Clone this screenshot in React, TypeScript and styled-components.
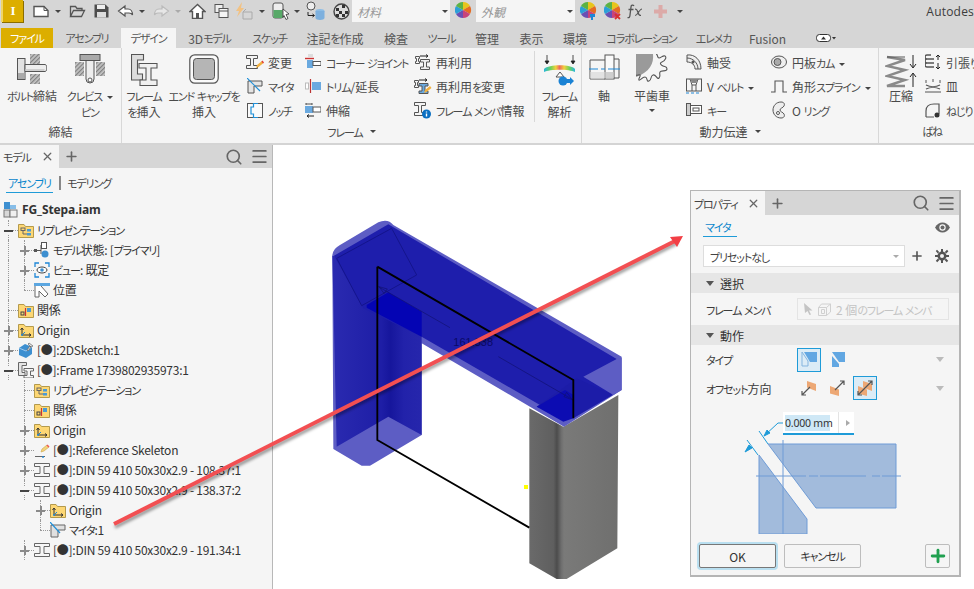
import React from 'react';
import styled, { createGlobalStyle } from 'styled-components';
import { Search, X, Plus, Menu } from 'lucide-react';

const GlobalStyle = createGlobalStyle`
  html, body {
    margin: 0;
    padding: 0;
    background: #fff;
  }
  body {
    font-family: "Noto Sans CJK JP", "Noto Sans", sans-serif;
    font-size: 12px;
    font-weight: 400;
    color: #3c3c3c;
    font-feature-settings: "palt" 1;
    -webkit-font-smoothing: antialiased;
  }
`;

/* the kana of the original UI font are much narrower than its kanji */
const Kana = styled.span`
  font-size: 11px;
  letter-spacing: -1.1px;
`;

const J = ({ t }: { t: string }) => (
  <>
    {t.split(/([\u3040-\u30FF]+)/).map((part, i) =>
      i % 2 ? <Kana key={i}>{part}</Kana> : part
    )}
  </>
);

/* ---------- icons ---------- */

const S = '#555';

const Glyph = ({ w = 16, h = 16, children }: { w?: number; h?: number; children: React.ReactNode }) => (
  <svg width={w} height={h} viewBox={`0 0 ${w} ${h}`} style={{ display: 'block', flex: 'none' }}>
    {children}
  </svg>
);

const Caret = styled.span<{ $c?: string }>`
  display: inline-block;
  width: 0;
  height: 0;
  border-left: 3px solid transparent;
  border-right: 3px solid transparent;
  border-top: 3px solid ${p => p.$c || '#444'};
  flex: none;
`;

const Hatch = ({ id }: { id: string }) => (
  <pattern id={id} width="3" height="3" patternUnits="userSpaceOnUse" patternTransform="rotate(45)">
    <rect width="3" height="3" fill="#c4c4c4" />
    <rect width="1.2" height="3" fill="#808080" />
  </pattern>
);

const NewIcon = () => (
  <Glyph w={17}>
    <path d="M1 3.500h10l4 4v6H1z" fill="#fff" stroke={S} strokeWidth="1.400" />
    <path d="M11 3.500v4h4" fill="none" stroke={S} />
  </Glyph>
);
const OpenIcon = () => (
  <Glyph w={17}>
    <path d="M1.500 13.500v-10h5l1.500 2h5v2M1.500 13.500l3-6h11l-3 6z" fill="none" stroke={S} strokeWidth="1.300" />
  </Glyph>
);
const SaveIcon = () => (
  <Glyph w={15}>
    <path d="M.5 1.500h11l3 3v10H.5z" fill="#4d4d4d" />
    <rect x="3" y="2" width="8" height="4" fill="#eee" />
    <rect x="3" y="9" width="9" height="5.500" fill="#ddd" />
  </Glyph>
);
const UndoIcon = () => (
  <Glyph w={17}>
    <path d="M8 3 1.500 8 8 13v-3h4c2 0 3 1 3.500 2 0-3-1.500-6-4.500-6H8z" fill="#fff" stroke={S} strokeWidth="1.200" />
  </Glyph>
);
const RedoIcon = () => (
  <Glyph w={17}>
    <path d="M9 3l6.500 5L9 13v-3H5c-2 0-3 1-3.500 2 0-3 1.500-6 4.500-6h3z" fill="#e6e6e6" stroke="#bbb" strokeWidth="1.200" />
  </Glyph>
);
const HomeIcon = () => (
  <Glyph w={17}>
    <path d="M8.500 1.500 1 8.500h2.500v7h10v-7H16z" fill="#fff" stroke={S} strokeWidth="1.400" />
    <rect x="7" y="10" width="3" height="5.500" fill={S} />
  </Glyph>
);
const WindowsIcon = () => (
  <Glyph w={15}>
    <rect x="1" y="1.500" width="8" height="8" fill="#eee" stroke={S} />
    <rect x="5" y="5.500" width="9" height="9" fill="#f5f5f5" stroke={S} />
    <path d="M5 8h9" stroke={S} />
  </Glyph>
);
const UpdateIcon = () => (
  <Glyph w={18} h={18}>
    <path d="M7 0 1 9h3l-2 6 7-9H6z" fill="#f2c283" />
    <path d="M8 10h9v7H8z" fill="none" stroke="#aaa" />
    <path d="M8 10l3-3" stroke="#aaa" />
  </Glyph>
);
const SelectIcon = () => (
  <Glyph w={18} h={18}>
    <rect x="1" y="1" width="10" height="15" rx="2" fill="#eee" stroke={S} />
    <rect x="1.500" y="8" width="9" height="8" fill="#58a968" />
    <path d="M11 7l6 5-3 .5 2 4-2 1-2-4-1 2z" fill="#fff" stroke="#333" strokeWidth=".8" />
  </Glyph>
);
const DbIcon = () => (
  <Glyph w={19} h={20}>
    <circle cx="5" cy="5" r="4" fill="#eee" stroke={S} />
    <path d="M2 11v3.500h6M6.500 13l2 1.500-2 1.500" fill="none" stroke="#222" />
    <ellipse cx="14" cy="10" rx="4.500" ry="2" fill="#8cbde6" />
    <path d="M9.500 10v7c0 2.500 9 2.500 9 0v-7" fill="#7db0de" />
  </Glyph>
);
const CheckerIcon = () => (
  <Glyph w={17} h={17}>
    <circle cx="8.500" cy="8.500" r="7.500" fill="#ddd" stroke="#444" strokeWidth="1.400" />
    <path d="M3 5h3v3H3zM9 2h3v3H9zM6 8h3v3H6zM12 8h3v3h-3zM9 11h3v3H9zM3 11h3v3H3z" fill="#333" />
  </Glyph>
);
const Wheel = ({ badge }: { badge?: 'paint' | 'x' }) => (
  <Glyph w={17} h={18}>
    <path d="M8 8V0a8 8 0 0 1 7 4z" fill="#e8c51c" />
    <path d="M8 8l7-4a8 8 0 0 1 0 8z" fill="#e56b22" />
    <path d="M8 8l7 4a8 8 0 0 1-7 4z" fill="#c8437a" />
    <path d="M8 8v8a8 8 0 0 1-7-4z" fill="#6a4fb3" />
    <path d="M8 8l-7 4a8 8 0 0 1 0-8z" fill="#2c9fd8" />
    <path d="M8 8 1 4a8 8 0 0 1 7-4z" fill="#5cb244" />
    {badge === 'paint' && <path d="M10 12h5v3h-2v3h-2v-3h-1z" fill="#1f87d6" />}
    {badge === 'x' && <path d="M11 12l5 5M16 12l-5 5" stroke="#d83030" strokeWidth="1.800" />}
  </Glyph>
);
const FxIcon = () => (
  <Glyph w={18}>
    <path d="M7 3c-1-1.500-3-1-3 1l-1 8c0 2-1 3-2.500 2.500M1.500 6.500h5" fill="none" stroke={S} strokeWidth="1.300" />
    <path d="M8 6c2 0 2.500 1.500 3 3.500s1.500 3 3 3M15 6c-1.500 0-3 2.500-4 4s-2 2.500-3 2.500" fill="none" stroke={S} strokeWidth="1.200" />
  </Glyph>
);
const PinkPlus = () => (
  <Glyph w={13} h={13}>
    <path d="M4.500 0h4v4.500H13v4H8.500V13h-4V8.500H0v-4h4.500z" fill="#dcaaa8" />
  </Glyph>
);
const BoltIcon = () => (
  <Glyph w={30} h={30}>
    <defs><Hatch id="hb" /></defs>
    <rect x="13" y="0" width="10" height="10" fill="url(#hb)" />
    <rect x="13" y="20" width="10" height="10" fill="url(#hb)" />
    <rect x=".5" y="4.500" width="7.500" height="21" fill="#e2e2e2" stroke={S} />
    <rect x="1" y="19" width="6.500" height="6" fill="#aaa" />
    <path d="M8 10.500h20c2.500 0 2.500 7 0 7H8z" fill="#eee" stroke={S} />
    <rect x="8.500" y="15" width="19" height="2" fill="#cfcfcf" />
  </Glyph>
);
const ClevisIcon = () => (
  <Glyph w={30} h={30}>
    <defs><Hatch id="hc" /></defs>
    <rect x="0" y="8" width="9" height="14" fill="url(#hc)" />
    <rect x="21" y="8" width="9" height="14" fill="url(#hc)" />
    <rect x="5" y=".5" width="20" height="6" fill="#aaa" stroke={S} />
    <path d="M11 6.500h8V25a4 4 0 0 1-8 0z" fill="#eee" stroke={S} />
    <circle cx="15" cy="26" r="2" fill="#fff" stroke={S} />
  </Glyph>
);
const FrameInsertIcon = () => (
  <Glyph w={27} h={32}>
    <path d="M.5.500h12V6h-6v14h5v6H.5z" fill="#ddd" stroke={S} strokeWidth="1.100" />
    <path d="M8 9.500h18V14h-6v12h6v5.500H9V26h6V14H8z" fill="#f0f0f0" stroke={S} strokeWidth="1.100" />
  </Glyph>
);
const EndCapIcon = () => (
  <Glyph w={30} h={30}>
    <rect x=".8" y=".8" width="28.400" height="28.400" rx="5" fill="#fafafa" stroke={S} strokeWidth="1.200" />
    <rect x="4.500" y="4.500" width="21" height="21" rx="3" fill="#b5b5b5" stroke={S} />
  </Glyph>
);
const ChangeIcon = () => (
  <Glyph w={18}>
    <path d="M.5 1.500h11v3h-4v7h4v3H.5v-3h4v-7h-4z" fill="#f4f4f4" stroke={S} />
    <path d="M10 14l1-3 5-4 1.500 2-5 4z" fill="#f0b040" />
    <path d="M15.500 7.500l1-1 1.500 2-1 1z" fill="#e23a3a" />
  </Glyph>
);
const MiterIcon = () => (
  <Glyph w={16}>
    <path d="M1 3h14v5H7v7H1z" fill="#e4e4e4" stroke={S} />
    <path d="M0 0l13 13" stroke="#1f8fd8" strokeWidth="1.200" />
  </Glyph>
);
const NotchIcon = () => (
  <Glyph w={16}>
    <rect x=".5" y="1.500" width="15" height="14" fill="#fafafa" stroke={S} />
    <path d="M11 1.500H6.500V5H4v7h2.500v3.500H11" fill="none" stroke="#1f8fd8" strokeWidth="1.200" />
  </Glyph>
);
const CornerIcon = () => (
  <Glyph w={16}>
    <rect x="3" y="0" width="5" height="3" fill="#ddd" />
    <path d="M0 4.500h9" stroke="#c33" strokeWidth="1.400" />
    <rect x="2" y="6" width="6" height="8" fill="#6aa9df" />
    <rect x="8" y="7.500" width="8" height="4" fill="#fff" stroke={S} />
  </Glyph>
);
const TrimIcon = () => (
  <Glyph w={16}>
    <rect x=".5" y="5" width="3" height="6" fill="#fff" stroke="#bbb" />
    <path d="M5.500 1v14" stroke="#b33" strokeWidth="1.200" />
    <rect x="7" y="4" width="9" height="8" fill="#6aa9df" />
  </Glyph>
);
const LengthenIcon = () => (
  <Glyph w={16}>
    <path d="M1 1v2M1 2h6M7 1v2" stroke={S} />
    <rect x="0" y="4" width="8" height="7" fill="#6aa9df" />
    <rect x="8" y="5" width="8" height="5" fill="#fff" stroke={S} />
    <path d="M2 14h7M2 14l2-1.500M2 14l2 1.500" stroke="#222" fill="none" />
  </Glyph>
);
const ReuseIcon = () => (
  <Glyph w={16} h={17}>
    <path d="M.5 2.500h4v2h-1v3h1v2h-4v-2h1v-3h-1z" fill="#f5f5f5" stroke={S} />
    <path d="M5.500 5.500h9V8h-3v5h3v2.500h-9V13h3V8h-3z" fill="#eee" stroke={S} />
    <path d="M5 2h8l-2-1.500M13 2l-2 1.500" stroke="#222" fill="none" />
  </Glyph>
);
const ReuseChangeIcon = () => (
  <Glyph w={18} h={17}>
    <path d="M.5 2.500h4v2h-1v3h1v2h-4v-2h1v-3h-1z" fill="#f5f5f5" stroke={S} />
    <path d="M5 5.500h9V8h-3v5h3v2.500H5V13h3V8H5z" fill="#6aa9df" stroke={S} />
    <path d="M5 2h8l-2-1.500M13 2l-2 1.500" stroke="#222" fill="none" />
    <path d="M10 15l1-3 5-4 1.500 2-5 4z" fill="#f0b040" />
  </Glyph>
);
const InfoIcon = () => (
  <Glyph w={18} h={18}>
    <path d="M.5 1.500h11v3h-4v7h4v3H.5v-3h4v-7h-4z" fill="#f4f4f4" stroke={S} />
    <circle cx="12.500" cy="13" r="4.500" fill="#0a6fc2" />
    <path d="M12.500 10.500v1M12.500 12.500v3" stroke="#fff" strokeWidth="1.400" />
  </Glyph>
);
const AnalysisIcon = () => (
  <Glyph w={32} h={34}>
    <defs>
      <linearGradient id="rb" x1="0" x2="1">
        <stop offset="0" stopColor="#26b7e0" />
        <stop offset=".22" stopColor="#6fd05a" />
        <stop offset=".38" stopColor="#f3d13c" />
        <stop offset=".5" stopColor="#ee6a5a" />
        <stop offset=".65" stopColor="#f3d13c" />
        <stop offset=".82" stopColor="#6fd05a" />
        <stop offset="1" stopColor="#26b7e0" />
      </linearGradient>
    </defs>
    <path d="M3 1v8M29 1v8M1 7l2 3 2-3zM27 7l2 3 2-3z" stroke="#222" fill="#222" strokeWidth=".8" />
    <path d="M0 15c5-5 27-5 31 0v3c-6-3-25-3-31 0z" fill="url(#rb)" />
    <path d="M16 18l-4 5h8z" fill="#fff" stroke={S} />
    <circle cx="19" cy="27" r="4.500" fill="#1a82d4" />
    <path d="M23 25h3v-2l4 4-4 4v-2h-3z" fill="#1a82d4" />
  </Glyph>
);
const ShaftIcon = () => (
  <Glyph w={31} h={26}>
    <path d="M16 6H1v19h15M25 5h5v19h-5" fill="#f5f5f5" stroke={S} />
    <rect x="16" y="1" width="9" height="24" fill="#fafafa" stroke={S} />
    <rect x="1.500" y="18" width="14" height="6.500" fill="#e2e2e2" />
    <rect x="16.500" y="18" width="8" height="6.500" fill="#cfcfcf" />
    <path d="M0 15h9M12 15h4M19 15h12" stroke="#1f87d6" strokeWidth="1.200" />
  </Glyph>
);
const GearIcon = () => (
  <Glyph w={33} h={33}>
    <path d="M0 0h17c1 9-3 18-17 23z" fill="#9a9a9a" />
    <path d="M20 0c2 0 1 4 3 4s4-3 6-2 0 5-3 6-1 3 1 4 4 0 4 3-6 1-7 3 1 4-1 6-3-4-6-3-1 5-4 6-1-4-4-4-5 4-6 3 2-4 1-5-3 1-4 0" fill="none" stroke={S} strokeWidth="1.100" />
  </Glyph>
);
const BearingIcon = () => (
  <Glyph w={16}>
    <path d="M1 1c8-1 14 5 14 14H9c0-4-3-7-8-7z" fill="#eee" stroke={S} />
    <path d="M1 4c6 0 11 5 11 11" fill="none" stroke={S} />
    <circle cx="7" cy="8" r="1.500" fill={S} />
  </Glyph>
);
const VBeltIcon = () => (
  <Glyph w={16}>
    <rect x=".5" y="1" width="15" height="12" fill="#f5f5f5" stroke={S} />
    <path d="M4 1l2 6v6M12 1l-2 6v6M6 7h4" fill="none" stroke={S} />
    <path d="M4 1h8l-2 4H6z" fill="#888" />
    <path d="M0 15h3M5 15h3M10 15h3" stroke="#1f87d6" />
  </Glyph>
);
const KeyIcon = () => (
  <Glyph w={16}>
    <rect x=".5" y="1.500" width="4" height="12" fill="#ccc" stroke={S} />
    <rect x="4.500" y="3.500" width="11" height="8" fill="#fff" stroke={S} />
    <rect x="7" y="6" width="6" height="3" fill="none" stroke={S} />
  </Glyph>
);
const CamIcon = () => (
  <Glyph w={16} h={14}>
    <ellipse cx="8" cy="7" rx="7.500" ry="6" fill="#eee" stroke={S} />
    <circle cx="6.500" cy="7" r="3.500" fill="#aaa" stroke={S} />
  </Glyph>
);
const SplineIcon = () => (
  <Glyph w={16}>
    <path d="M0 14h4V3h8v11h4" fill="none" stroke={S} strokeWidth="1.100" />
  </Glyph>
);
const ORingIcon = () => (
  <Glyph w={14} h={18}>
    <path d="M9 1C4 1 1 5 1 9s3 8 8 8c3 0 4-2 3-4s-4-2-4-4 3-2 4-4 0-4-3-4z" fill="#eee" stroke={S} />
    <circle cx="6" cy="12" r="1.500" fill="#fff" stroke={S} />
  </Glyph>
);
const SpringIcon = () => (
  <Glyph w={32} h={34}>
    <path d="M2 3l18 3-18 6 18 4-18 6 18 4-18 6h18" fill="none" stroke="#8a8a8a" strokeWidth="2.400" />
    <path d="M2 3h18" fill="none" stroke="#555" />
    <path d="M28 1v12M25 10l3 4 3-4M28 33V20M25 23l3-4 3 4" fill="none" stroke="#222" />
  </Glyph>
);
const TensionIcon = () => (
  <Glyph w={16}>
    <path d="M6 1H2a2 2 0 0 0 0 4h7M2 5a2 2 0 0 0 0 4h7M2 9a2 2 0 0 0 0 4h7" fill="none" stroke={S} strokeWidth="1.500" />
    <path d="M13 1v5M11 3l2-2 2 2M13 9v6M11 13l2 2 2-2" fill="none" stroke="#222" />
  </Glyph>
);
const DishIcon = () => (
  <Glyph w={16}>
    <path d="M1 2v3M15 2v3M8 1v3" stroke={S} />
    <path d="M1 7c4 2 10 2 14 0M1 11c4-2 10-2 14 0" fill="none" stroke={S} strokeWidth="1.200" />
    <path d="M0 14h16" stroke={S} />
  </Glyph>
);
const TorsionIcon = () => (
  <Glyph w={16}>
    <path d="M1 15V9c0-5 3-7 8-7h5v10" fill="none" stroke={S} strokeWidth="1.200" />
    <circle cx="12" cy="13" r="2.500" fill="#333" />
    <path d="M1 15h8" stroke={S} />
  </Glyph>
);

/* tree icons */
const Folder = ({ children }: { children?: React.ReactNode }) => (
  <Glyph>
    <path d="M.5 2.500v13h15v-11h-8L6 2.500z" fill="#fdd774" stroke="#b49a4c" />
    {children}
  </Glyph>
);
const RepFolder = () => (
  <Folder>
    <rect x="3" y="6" width="4" height="2.500" fill="none" stroke="#666" />
    <rect x="9" y="7" width="4" height="2.500" fill="#4a9ad4" />
    <rect x="9" y="11" width="4" height="2.500" fill="#4a9ad4" />
    <path d="M5 8.500V12h4" fill="none" stroke="#666" />
  </Folder>
);
const RelFolder = () => (
  <Folder>
    <rect x="3" y="10" width="3" height="3" fill="none" stroke="#444" />
    <path d="M7.500 6v8" stroke="#c33" strokeWidth="1.200" />
    <rect x="9" y="6" width="4" height="4" fill="#4a9ad4" />
  </Folder>
);
const OriginFolder = () => (
  <Folder>
    <path d="M4 13V6M2.500 8 4 6l1.500 2M4 13h9M11 11.500l2 1.500-2 1.500" fill="none" stroke="#333" />
    <path d="M4 13l3-3" stroke="#1f87d6" />
    <circle cx="4" cy="13" r="1" fill="#1f87d6" />
  </Folder>
);
const AsmIcon = () => (
  <Glyph>
    <rect x="1" y="0" width="6" height="7" fill="#3d8fd0" />
    <rect x="7" y="3" width="6" height="4" fill="#86bde8" />
    <rect x="1" y="8" width="6" height="7" fill="#d8d8d8" stroke="#777" />
    <rect x="7" y="8" width="7" height="7" fill="#f0f0f0" stroke="#777" />
  </Glyph>
);
const StateIcon = () => (
  <Glyph>
    <rect x="0" y="7" width="3" height="3" fill="#555" />
    <path d="M3 8.500h4M7 3v9" stroke="#555" fill="none" />
    <rect x="7.500" y=".5" width="5" height="6" fill="#fff" stroke="#555" />
    <circle cx="11" cy="12" r="3.500" fill="#3d8fd0" />
  </Glyph>
);
const ViewIcon = () => (
  <Glyph>
    <path d="M1 5V1h4M11 1h4v4M15 11v4h-4M5 15H1v-4" fill="none" stroke="#1f87d6" strokeWidth="1.300" />
    <ellipse cx="8" cy="8" rx="5" ry="3" fill="#fff" stroke="#444" />
    <circle cx="8" cy="8" r="1.800" fill="#3d8fd0" />
  </Glyph>
);
const PositionIcon = () => (
  <Glyph>
    <path d="M0 1h16v3H0z" fill="#5ba6e0" />
    <path d="M1 4v11h4V9l6 6 3-3-7-8" fill="#fff" stroke="#666" />
  </Glyph>
);
const SketchIcon = () => (
  <Glyph>
    <path d="M1 6l6-4 7 3v7l-6 4-7-3z" fill="#3d8fd0" />
    <path d="M1 6l7 3 6-4" fill="none" stroke="#9cc9ee" />
    <path d="M9 8l3-4 1 1-3 4zM11 1l4 3-2 1-3-3z" fill="#e5e5e5" stroke="#666" strokeWidth=".7" />
  </Glyph>
);
const FrameTreeIcon = () => (
  <Glyph>
    <path d="M.5.500h8v3H4v7h3v3H.5z" fill="#e4e4e4" stroke="#666" />
    <path d="M6 6.500h9.500V9h-3v4.500h3V16H6v-2.500h3V9H6z" fill="#f5f5f5" stroke="#666" />
  </Glyph>
);
const SkeletonIcon = () => (
  <Glyph>
    <path d="M1 14.500h10" stroke="#666" />
    <path d="M7 10l1-3 5-4 2 2-5 4z" fill="#f4d27a" stroke="#c9a64a" strokeWidth=".6" />
    <path d="M12.500 3.500l1-1 2 2-1 1z" fill="#e55" />
    <path d="M9 14v2" stroke="#1f87d6" strokeWidth="1.400" />
  </Glyph>
);
const BeamIcon = () => (
  <Glyph>
    <path d="M.5 1.500h15v3H10v7h5.500v3H.5v-3H6v-7H.5z" fill="#f7f7f7" stroke="#666" />
  </Glyph>
);
const MiterNodeIcon = () => (
  <Glyph>
    <path d="M1 3h14v5H8v7H1z" fill="#e0e0e0" stroke="#666" />
    <path d="M0 0l10 11" stroke="#1f8fd8" strokeWidth="1.200" />
  </Glyph>
);

/* property panel icons */
const EyeFill = () => (
  <Glyph w={15} h={11}>
    <path d="M0 5.500C2 2 4.500.5 7.500.5S13 2 15 5.500C13 9 10.500 10.500 7.500 10.500S2 9 0 5.500z" fill="#666" />
    <circle cx="7.500" cy="5.500" r="3.200" fill="#f5f5f5" />
    <circle cx="7.500" cy="5.500" r="2" fill="#666" />
  </Glyph>
);
const GearFill = () => (
  <Glyph w={14} h={14}>
    <path d="M7 2.500a4.500 4.500 0 1 0 0 9 4.500 4.500 0 0 0 0-9zM7 5a2 2 0 1 1 0 4 2 2 0 0 1 0-4z" fill="#555" fillRule="evenodd" />
    <path d="M6 0h2v3H6zM6 11h2v3H6zM0 6h3v2H0zM11 6h3v2h-3zM2 .8l2.200 2.200-1.400 1.400L.8 2zM11 9.600l2.200 2.200-1.400 1.400-2.200-2.200zM12 .8l1.400 1.400L11.200 4.400 9.800 3zM3 9.600L4.400 11 2.200 13.200.8 11.800z" fill="#555" />
  </Glyph>
);
const CursorIcon = () => (
  <Glyph w={9} h={12}>
    <path d="M0 0l8.500 7.500H5l2 4-1.500.5-2-4L1 10z" fill="#c4c4c4" />
  </Glyph>
);
const BoxIcon = () => (
  <Glyph w={13} h={13}>
    <path d="M.5 4.500h8v8h-8zM.5 4.500l3-3.500h9v8l-4 3.500M8.500 4.500l4-3.500M3.500 6.500h3v4h-3z" fill="none" stroke="#d0d0d0" />
  </Glyph>
);
const TypeA = () => (
  <Glyph w={17} h={17}>
    <path d="M3 1h13v10H9z" fill="#62a7e2" />
    <path d="M1 1l6 9v5H1z" fill="#dcecf6" stroke="#85b5df" />
  </Glyph>
);
const TypeB = () => (
  <Glyph w={16} h={17}>
    <path d="M3 1h13v10h-6z" fill="#62a7e2" />
    <path d="M3 5l7 8v3H3z" fill="#62a7e2" />
  </Glyph>
);
const OffsetIcon = ({ v }: { v: 1 | 2 | 3 }) => (
  <Glyph w={16} h={16}>
    {v !== 2 && <path d="M6 1l9 3v7L6 7.500z" fill="#eda875" />}
    {v !== 1 && <path d="M1 6l9 3.500V16L1 13.500z" fill="#eda875" />}
    {v === 1 && <path d="M9 7 1 15M1 11v4h4" fill="none" stroke="#555" strokeWidth="1.200" />}
    {v === 2 && <path d="M6 10l9-9M11 1h4v4" fill="none" stroke="#555" strokeWidth="1.200" />}
    {v === 3 && <path d="M1 15 15 1M11 1h4v4M1 11v4h4" fill="none" stroke="#555" strokeWidth="1.200" />}
  </Glyph>
);

/* ---------- page ---------- */

const Page = styled.div`
  position: relative;
  width: 974px;
  height: 589px;
  overflow: hidden;
  display: flex;
  flex-direction: column;
  background: #fff;
`;

const QuickBar = styled.div`
  height: 28px;
  flex: none;
  background: #d6d6d6;
  display: flex;
  align-items: flex-start;
`;

const Logo = styled.div`
  width: 22px;
  height: 22px;
  margin-left: 1px;
  background: #dcae00;
  box-shadow: 1px 1px 0 #8a6d00;
  border-left: 2px solid #f0d566;
  box-sizing: border-box;
  color: #fff;
  font: bold 13px "Liberation Serif", serif;
  display: flex;
  align-items: center;
  justify-content: center;
  margin-right: 10px;
`;

const QatTool = styled.div<{ $w: number }>`
  width: ${p => p.$w}px;
  height: 22px;
  flex: none;
  display: flex;
  align-items: center;
  justify-content: center;
`;

const QatField = styled.div<{ $w: number }>`
  width: ${p => p.$w}px;
  height: 22px;
  flex: none;
  box-sizing: border-box;
  background: #f5f5f5;
  color: #999;
  font-style: italic;
  display: flex;
  align-items: center;
  justify-content: space-between;
  padding: 0 2px 0 5px;
`;

const AppTitle = styled.div`
  margin-left: auto;
  height: 22px;
  line-height: 24px;
  white-space: nowrap;
  font-family: "Open Sans", sans-serif;
  letter-spacing: 0.2px;
`;

const TabBar = styled.div`
  height: 20px;
  flex: none;
  background: #d6d6d6;
  display: flex;
  align-items: stretch;
  padding-left: 1px;
`;

const Tab = styled.div<{ $w: number; $active?: boolean; $file?: boolean }>`
  width: ${p => p.$w}px;
  flex: none;
  display: flex;
  align-items: center;
  justify-content: center;
  white-space: nowrap;
  color: ${p => (p.$file ? '#fff' : '#555')};
  background: ${p => (p.$file ? '#dcae00' : p.$active ? '#f5f5f5' : 'transparent')};
`;

const Ribbon = styled.div`
  height: 97px;
  flex: none;
  background: #f5f5f5;
  border-bottom: 2px solid #d4d4d4;
  box-sizing: border-box;
  display: flex;
  overflow: hidden;
`;

const RibbonGroup = styled.div<{ $w: number; $last?: boolean }>`
  width: ${p => p.$w}px;
  flex: none;
  display: flex;
  flex-direction: column;
  border-right: ${p => (p.$last ? 'none' : '1px solid #d8d8d8')};
  box-sizing: border-box;
`;

const GroupBody = styled.div`
  height: 72px;
  flex: none;
  display: flex;
`;

const GroupLabel = styled.div`
  height: 23px;
  flex: none;
  display: flex;
  align-items: center;
  justify-content: center;
  gap: 7px;
  color: #4a4a4a;
  padding-bottom: 1px;
  box-sizing: border-box;
`;

const BigButton = styled.div<{ $w: number; $ml?: number }>`
  width: ${p => p.$w}px;
  margin-left: ${p => p.$ml || 0}px;
  flex: none;
  display: flex;
  flex-direction: column;
  align-items: center;
  line-height: 16px;
  text-align: center;
  white-space: nowrap;
  color: #4a4a4a;
`;

const BigIcon = styled.div`
  height: 34px;
  margin-top: 6px;
  flex: none;
  display: flex;
  align-items: flex-start;
  justify-content: center;
`;

const BigCaret = styled(Caret)`
  margin-top: 5px;
`;

const InlineCaret = styled(Caret)`
  margin-left: 5px;
  vertical-align: 2px;
`;

const SmallColumn = styled.div<{ $w: number; $ml?: number }>`
  width: ${p => p.$w}px;
  margin-left: ${p => p.$ml || 0}px;
  flex: none;
  display: flex;
  flex-direction: column;
  padding-top: 2px;
`;

const SmallTool = styled.div`
  height: 24px;
  flex: none;
  display: flex;
  align-items: center;
  gap: 5px;
  white-space: nowrap;
  color: #4a4a4a;
`;

const SmallIcon = styled.div`
  width: 16px;
  flex: none;
  display: flex;
  justify-content: center;
`;

const VSep = styled.div`
  width: 1px;
  height: 71px;
  margin-top: 3px;
  background: #d8d8d8;
  flex: none;
`;

const Main = styled.div`
  flex: 1;
  display: flex;
  min-height: 0;
`;

const Browser = styled.div`
  width: 272px;
  flex: none;
  background: #f5f5f5;
  border-right: 1px solid #b8b8b8;
  display: flex;
  flex-direction: column;
`;

const DockHeader = styled.div<{ $h: number }>`
  height: ${p => p.$h}px;
  flex: none;
  background: #d6d6d6;
  display: flex;
  align-items: center;
  color: #444;
`;

const DockTab = styled.div<{ $w: number }>`
  width: ${p => p.$w}px;
  height: 100%;
  flex: none;
  background: #f5f5f5;
  display: flex;
  align-items: center;
  justify-content: space-between;
  padding: 0 5px 0 3px;
  box-sizing: border-box;
  white-space: nowrap;
`;

const HeaderTools = styled.div`
  margin-left: auto;
  display: flex;
  align-items: center;
  gap: 7px;
  padding-right: 3px;
`;

const HeaderPlus = styled.div`
  margin-left: 5px;
  display: flex;
`;

const SubTabs = styled.div`
  height: 32px;
  flex: none;
  display: flex;
  align-items: flex-start;
  padding: 6px 0 0 6px;
  box-sizing: border-box;
`;

const SubTab = styled.div<{ $active?: boolean }>`
  height: 18px;
  line-height: 17px;
  padding: 0 2px;
  color: ${p => (p.$active ? '#0a86cc' : '#444')};
  border-bottom: ${p => (p.$active ? '1px solid #1e9bd8' : 'none')};
  white-space: nowrap;
`;

const SubDivider = styled.div`
  width: 2px;
  height: 14px;
  margin: 2px 4px 0 6px;
  background: #888;
`;

const Tree = styled.div`
  flex: 1;
`;

const TreeRow = styled.div`
  height: 20px;
  display: flex;
  align-items: center;
  white-space: nowrap;
  letter-spacing: -0.25px;
  color: #333;
`;

const RootRow = styled(TreeRow)`
  padding-left: 3px;
  gap: 3px;
  font-family: "Noto Sans", sans-serif;
  font-weight: 700;
  font-size: 12px;
  letter-spacing: -0.1px;
`;

const TreeText = styled.span`
  margin-top: -2px;
`;

const TreeCell = styled.div<{ $kind: string }>`
  position: relative;
  width: 16px;
  height: 20px;
  flex: none;

  &::before {
    content: '';
    position: absolute;
    left: 8px;
    top: 0;
    height: ${p => (p.$kind === 'end' ? '10px' : '20px')};
    border-left: 1px dotted #999;
    display: ${p => (p.$kind === '' || p.$kind === 'skip' ? 'none' : 'block')};
  }

  &::after {
    content: '';
    position: absolute;
    left: 8px;
    top: 10px;
    width: 10px;
    border-top: 1px dotted #999;
    display: ${p => (p.$kind === 'v' || p.$kind === '' || p.$kind === 'skip' ? 'none' : 'block')};
  }
`;

const Expander = styled.span<{ $minus?: boolean }>`
  position: absolute;
  z-index: 1;
  left: 4px;
  top: 6px;
  width: 9px;
  height: 9px;
  background:
    linear-gradient(${p => (p.$minus ? '#444' : '#8a8a8a')}, ${p => (p.$minus ? '#444' : '#8a8a8a')}) center / 9px 2px no-repeat,
    linear-gradient(#8a8a8a, #8a8a8a) center / ${p => (p.$minus ? '0' : '2px')} 9px no-repeat,
    #f5f5f5;
`;

const TreeIconBox = styled.div`
  margin: 0 3px 0 2px;
  flex: none;
  display: flex;
`;

const Canvas = styled.div`
  flex: 1;
  position: relative;
  min-width: 0;
  background: #fff;
`;

const Scene = styled.svg`
  display: block;
  width: 100%;
  height: 100%;
`;

const ArrowOverlay = styled.svg`
  position: absolute;
  left: 0;
  top: 0;
  pointer-events: none;
`;

const Properties = styled.div`
  position: absolute;
  left: 417px;
  top: 45px;
  width: 271px;
  height: 387px;
  box-sizing: border-box;
  background: #f5f5f5;
  border: 1px solid #b5b5b5;
  border-width: 1px 2px 2px 1px;
  display: flex;
  flex-direction: column;
`;

const TitleRow = styled.div`
  display: flex;
  align-items: center;
  justify-content: space-between;
  padding: 0 9px 0 12px;
  height: 24px;
  flex: none;
  box-sizing: border-box;
`;

const TitleLink = styled.div`
  color: #0a86cc;
  border-bottom: 1px solid #1e9bd8;
  padding: 0 2px;
  width: 30px;
  line-height: 17px;
`;

const PresetRow = styled.div`
  display: flex;
  align-items: center;
  gap: 5px;
  padding: 4px 10px 0 12px;
  height: 30px;
  flex: none;
  box-sizing: border-box;
`;

const PresetSelect = styled.div`
  width: 202px;
  height: 22px;
  box-sizing: border-box;
  background: #fff;
  border: 1px solid #ddd;
  display: flex;
  align-items: center;
  justify-content: space-between;
  padding: 0 5px 0 6px;
  color: #444;
`;

const PresetTools = styled.div`
  flex: 1;
  display: flex;
  align-items: center;
  justify-content: space-between;
`;

const SectionHead = styled.div<{ $mt?: number }>`
  height: 20px;
  flex: none;
  margin-top: ${p => p.$mt || 0}px;
  background: #e6e6e6;
  display: flex;
  align-items: center;
  gap: 6px;
  padding-left: 15px;
  color: #333;
`;

const SectionCaret = styled(Caret)`
  border-left-width: 4px;
  border-right-width: 4px;
  border-top-width: 5px;
  border-top-color: #555;
`;

const FieldRow = styled.div<{ $h: number }>`
  height: ${p => p.$h}px;
  flex: none;
  display: flex;
  align-items: center;
  padding: 0 10px 0 15px;
  color: #3c3c3c;
`;

const FieldLabel = styled.div`
  width: 91px;
  flex: none;
  white-space: nowrap;
`;

const GhostInput = styled.div`
  width: 152px;
  height: 22px;
  box-sizing: border-box;
  border: 1px solid #e4e4e4;
  display: flex;
  align-items: center;
  gap: 5px;
  padding-left: 6px;
  color: #c4c4c4;
  white-space: nowrap;
`;

const ToggleGroup = styled.div`
  flex: 1;
  display: flex;
  align-items: center;
  gap: 4px;
`;

const Toggle = styled.div<{ $on?: boolean }>`
  width: 24px;
  height: 24px;
  box-sizing: border-box;
  display: flex;
  align-items: center;
  justify-content: center;
  flex: none;
  border: 1px solid ${p => (p.$on ? '#1e9bd8' : 'transparent')};
  background: ${p => (p.$on ? '#dcecf6' : 'transparent')};
`;

const RowCaret = styled(Caret)`
  border-left-width: 4px;
  border-right-width: 4px;
  border-top-width: 5px;
  border-top-color: #bbb;
  margin-right: 5px;
`;

const Diagram = styled.div`
  position: relative;
  height: 126px;
  flex: none;
  margin-top: 6px;
`;

const DiagramSvg = styled.svg`
  display: block;
`;

const OffsetInput = styled.div`
  position: absolute;
  left: 92px;
  top: 4px;
  width: 71px;
  height: 23px;
  box-sizing: border-box;
  background: #fff;
  border-bottom: 2px solid #1e9bd8;
  display: flex;
  align-items: center;
  font-family: "Noto Sans", sans-serif;
  font-size: 10.5px;
`;

const OffsetValue = styled.div`
  margin-left: 2px;
  width: 45px;
  height: 16px;
  line-height: 16px;
  background: #cfe8f6;
  white-space: nowrap;
  letter-spacing: -0.2px;
  color: #333;
`;

const OffsetStep = styled.div`
  margin-left: 8px;
  padding-left: 7px;
  height: 100%;
  border-left: 1px solid #e4e4e4;
  display: flex;
  align-items: center;
`;

const StepArrow = styled.span`
  width: 0;
  height: 0;
  border-top: 3px solid transparent;
  border-bottom: 3px solid transparent;
  border-left: 4px solid #aaa;
`;

const Footer = styled.div`
  display: flex;
  align-items: center;
  padding: 10px 8px 0;
  gap: 8px;
`;

const PanelButton = styled.div<{ $primary?: boolean; $w?: number }>`
  width: ${p => p.$w || 77}px;
  height: 24px;
  box-sizing: border-box;
  display: flex;
  align-items: center;
  justify-content: center;
  background: #f5f5f5;
  border-radius: 2px;
  border: 1px solid ${p => (p.$primary ? '#777' : '#bdbdbd')};
  box-shadow: ${p => (p.$primary ? '0 0 0 2px #b9dff0' : 'none')};
  color: #333;
`;

const AddButton = styled(PanelButton)`
  margin-left: auto;
  margin-right: 1px;
`;

/* ---------- data ---------- */

const qat: [number, React.ReactNode][] = [
  [16, <NewIcon />], [18, <Caret />], [20, <OpenIcon />], [28, <SaveIcon />], [20, <UndoIcon />], [14, <Caret />],
  [24, <RedoIcon />], [10, <Caret $c="#aaa" />], [28, <HomeIcon />], [20, <WindowsIcon />], [26, <UpdateIcon />], [10, <Caret />],
  [28, <SelectIcon />], [4, <Caret />], [32, <DbIcon />], [21, <CheckerIcon />],
];

const tabs: [number, string][] = [
  [68, 'アセンブリ'], [55, 'デザイン'], [67, '3D モデル'], [53, 'スケッチ'], [78, '注記を作成'], [44, '検査'], [47, 'ツール'],
  [44, '管理'], [45, '表示'], [42, '環境'], [91, 'コラボレーション'], [53, 'エレメカ'], [55, 'Fusion'],
];

type Row = { cells: string[]; icon: React.ReactNode; text: string };

const rows: Row[] = [
  { cells: ['minus'], icon: <RepFolder />, text: 'リプレゼンテーション' },
  { cells: ['v', 'plus'], icon: <StateIcon />, text: 'モデル状態: [プライマリ]' },
  { cells: ['v', 'plus'], icon: <ViewIcon />, text: 'ビュー: 既定' },
  { cells: ['v', 'end'], icon: <PositionIcon />, text: '位置' },
  { cells: ['tee'], icon: <RelFolder />, text: '関係' },
  { cells: ['plus'], icon: <OriginFolder />, text: 'Origin' },
  { cells: ['plus'], icon: <SketchIcon />, text: '[●]:2DSketch:1' },
  { cells: ['minus'], icon: <FrameTreeIcon />, text: '[●]:Frame 1739802935973:1' },
  { cells: ['', 'tee'], icon: <RepFolder />, text: 'リプレゼンテーション' },
  { cells: ['', 'tee'], icon: <RelFolder />, text: '関係' },
  { cells: ['', 'plus'], icon: <OriginFolder />, text: 'Origin' },
  { cells: ['', 'plus'], icon: <SkeletonIcon />, text: '[●]:Reference Skeleton' },
  { cells: ['', 'plus'], icon: <BeamIcon />, text: '[●]:DIN 59 410 50x30x2.9 - 108.37:1' },
  { cells: ['', 'minus'], icon: <BeamIcon />, text: '[●]:DIN 59 410 50x30x2.9 - 138.37:2' },
  { cells: ['', 'skip', 'plus'], icon: <OriginFolder />, text: 'Origin' },
  { cells: ['', 'skip', 'end'], icon: <MiterNodeIcon />, text: 'マイタ:1' },
  { cells: ['', 'plus'], icon: <BeamIcon />, text: '[●]:DIN 59 410 50x30x2.9 - 191.34:1' },
];

const Small = ({ icon, label, caret }: { icon: React.ReactNode; label: string; caret?: boolean }) => (
  <SmallTool>
    <SmallIcon>{icon}</SmallIcon>
    <span><J t={label} />{caret && <InlineCaret />}</span>
  </SmallTool>
);

const Big = ({ w, ml, icon, lines, caret }: { w: number; ml?: number; icon: React.ReactNode; lines: string[]; caret?: boolean }) => (
  <BigButton $w={w} $ml={ml}>
    <BigIcon>{icon}</BigIcon>
    {lines.map(line => <span key={line}><J t={line} /></span>)}
    {caret && <BigCaret />}
  </BigButton>
);

const DockTools = () => (
  <HeaderTools>
    <Search size={18} color="#666" strokeWidth={2.2} />
    <Menu size={19} color="#666" strokeWidth={2.2} />
  </HeaderTools>
);

/* 3D part drawn in the coordinates of the crop, moved onto the canvas */
const Part = () => (
  <Scene viewBox="273 145 701 444">
    <defs>
      <linearGradient id="steel" x1="0" x2="1">
        <stop offset="0" stopColor="#6a6a6a" />
        <stop offset=".27" stopColor="#5f5f5f" />
        <stop offset=".31" stopColor="#4c4c4c" />
        <stop offset=".36" stopColor="#6e6e6e" />
        <stop offset=".39" stopColor="#7a7a79" />
        <stop offset="1" stopColor="#6f6f6e" />
      </linearGradient>
      <linearGradient id="col" x1="0" x2="1">
        <stop offset="0" stopColor="#2a2ab0" />
        <stop offset=".55" stopColor="#1e1ea6" />
        <stop offset=".65" stopColor="#16169c" />
        <stop offset=".8" stopColor="#2222aa" />
        <stop offset="1" stopColor="#2626ac" />
      </linearGradient>
    </defs>
    <g transform="translate(310 205) scale(.33333)">
      <path d="M658 610 760 665 925 570 922 1030 770 1122H740L658 1075Z" fill="url(#steel)" />
      <path d="M658 604 760 662 764 650 672 598Z" fill="#e8e8e8" />
      <path d="M225 47Q240 47 250 60L935 455V555L762 665 660 605 335 415V690L180 782H155L70 732 67 150Q70 130 90 120L205 52Q215 47 225 47Z" fill="#5d5dc4" />
      <path d="M67 152 335 210V690L235 635 80 725Z" fill="url(#col)" />
      <path d="M72 152 235 58 920 462 908 568 762 645 690 600 335 395 160 310Z" fill="#1e1eac" />
      <path d="M170 300 235 262 335 320V395L170 308Z" fill="#0404b4" />
      <path d="M820 515 920 462 935 458V555L910 570Z" fill="#5d5dc4" />
      <path d="M800 520 908 570 790 640 680 605Z" fill="#1c1ca8" />
      <path d="M680 605 765 555 790 570V640L760 650Z" fill="#0c0cb2" />
      <path d="M80 160 155 302 320 210 245 70Z" fill="none" stroke="#14148c" strokeWidth="3" />
      <path d="M205 245 420 368M565 455 790 585" stroke="#101070" strokeWidth="2" fill="none" />
      <path d="M207 245 232 252 222 265Z" fill="none" stroke="#101070" strokeWidth="2" />
      <path d="M788 585 762 575 770 562Z" fill="none" stroke="#101070" strokeWidth="2" />
      <text x="430" y="424" fontFamily="Liberation Sans, sans-serif" fontSize="33" fill="#0a0a68">161.338</text>
      <path d="M202 185 790 525V640M202 185V705L658 968" fill="none" stroke="#000" strokeWidth="5.500" />
      <rect x="642" y="840" width="12" height="12" fill="#ffff00" />
    </g>
  </Scene>
);

const App = () => (
  <Page>
    <GlobalStyle />
    <QuickBar>
      <Logo>I</Logo>
      {qat.map(([w, node], i) => (
        <QatTool key={i} $w={w}>{node}</QatTool>
      ))}
      <QatField $w={98}>材料<Caret /></QatField>
      <QatTool $w={26}><Wheel /></QatTool>
      <QatField $w={99}>外観<Caret /></QatField>
      <QatTool $w={26}><Wheel badge="paint" /></QatTool>
      <QatTool $w={22}><Wheel badge="x" /></QatTool>
      <QatTool $w={26}><FxIcon /></QatTool>
      <QatTool $w={22}><PinkPlus /></QatTool>
      <QatTool $w={18}><Caret /></QatTool>
      <AppTitle>Autodes</AppTitle>
    </QuickBar>

    <TabBar>
      <Tab $w={52} $file><J t="ファイル" /></Tab>
      {tabs.map(([w, label]) => (
        <Tab key={label} $w={w} $active={label === 'デザイン'}><J t={label} /></Tab>
      ))}
      <Tab $w={62}>
        <Glyph w={20} h={10}>
          <rect x=".5" y="1.500" width="14" height="7" rx="3" fill="#fff" stroke="#333" />
          <path d="M5 6.500l2.500-3 2.500 3z" fill="#333" />
          <path d="M16 4h4l-2 2.500z" fill="#333" />
        </Glyph>
      </Tab>
    </TabBar>

    <Ribbon>
      <RibbonGroup $w={122}>
        <GroupBody>
          <Big w={58} ml={3} icon={<BoltIcon />} lines={['ボルト締結']} />
          <BigButton $w={58}>
            <BigIcon><ClevisIcon /></BigIcon>
            <span><J t="クレビス" /><InlineCaret /></span>
            <span><J t="ピン" /></span>
          </BigButton>
        </GroupBody>
        <GroupLabel>締結</GroupLabel>
      </RibbonGroup>

      <RibbonGroup $w={460}>
        <GroupBody>
          <Big w={40} ml={2} icon={<FrameInsertIcon />} lines={['フレーム', 'を挿入']} />
          <Big w={78} ml={1} icon={<EndCapIcon />} lines={['エンド キャップを', '挿入']} />
          <SmallColumn $w={58} $ml={4}>
            <Small icon={<ChangeIcon />} label="変更" />
            <Small icon={<MiterIcon />} label="マイタ" />
            <Small icon={<NotchIcon />} label="ノッチ" />
          </SmallColumn>
          <SmallColumn $w={110}>
            <Small icon={<CornerIcon />} label="コーナー ジョイント" />
            <Small icon={<TrimIcon />} label="トリム/延長" />
            <Small icon={<LengthenIcon />} label="伸縮" />
          </SmallColumn>
          <SmallColumn $w={119}>
            <Small icon={<ReuseIcon />} label="再利用" />
            <Small icon={<ReuseChangeIcon />} label="再利用を変更" />
            <Small icon={<InfoIcon />} label="フレーム メンバ情報" />
          </SmallColumn>
          <VSep />
          <Big w={47} ml={1} icon={<AnalysisIcon />} lines={['フレーム', '解析']} />
        </GroupBody>
        <GroupLabel><span><J t="フレーム" /></span><Caret /></GroupLabel>
      </RibbonGroup>

      <RibbonGroup $w={297}>
        <GroupBody>
          <Big w={44} icon={<ShaftIcon />} lines={['軸']} />
          <Big w={52} caret icon={<GearIcon />} lines={['平歯車']} />
          <SmallColumn $w={85} $ml={8}>
            <Small icon={<BearingIcon />} label="軸受" />
            <Small icon={<VBeltIcon />} label="V ベルト" caret />
            <Small icon={<KeyIcon />} label="キー" />
          </SmallColumn>
          <SmallColumn $w={104}>
            <Small icon={<CamIcon />} label="円板カム" caret />
            <Small icon={<SplineIcon />} label="角形スプライン" caret />
            <Small icon={<ORingIcon />} label="O リング" />
          </SmallColumn>
        </GroupBody>
        <GroupLabel><span>動力伝達</span><Caret /></GroupLabel>
      </RibbonGroup>

      <RibbonGroup $w={106} $last>
        <GroupBody>
          <Big w={44} icon={<SpringIcon />} lines={['圧縮']} />
          <SmallColumn $w={60} $ml={2}>
            <Small icon={<TensionIcon />} label="引張り" />
            <Small icon={<DishIcon />} label="皿" />
            <Small icon={<TorsionIcon />} label="ねじり" />
          </SmallColumn>
        </GroupBody>
        <GroupLabel><J t="ばね" /></GroupLabel>
      </RibbonGroup>
    </Ribbon>

    <Main>
      <Browser>
        <DockHeader $h={23}>
          <DockTab $w={59}><span><J t="モデル" /></span><X size={13} color="#666" strokeWidth={2.4} /></DockTab>
          <HeaderPlus><Plus size={15} color="#666" strokeWidth={2.6} /></HeaderPlus>
          <DockTools />
        </DockHeader>
        <SubTabs>
          <SubTab $active><J t="アセンブリ" /></SubTab>
          <SubDivider />
          <SubTab><J t="モデリング" /></SubTab>
        </SubTabs>
        <Tree>
          <RootRow>
            <AsmIcon />
            <TreeText>FG_Stepa.iam</TreeText>
          </RootRow>
          {rows.map((row, i) => (
            <TreeRow key={i}>
              {row.cells.map((kind, j) => (
                <TreeCell key={j} $kind={kind === 'plus' || kind === 'minus' ? 'tee' : kind}>
                  {(kind === 'plus' || kind === 'minus') && <Expander $minus={kind === 'minus'} />}
                </TreeCell>
              ))}
              <TreeIconBox>{row.icon}</TreeIconBox>
              <TreeText><J t={row.text} /></TreeText>
            </TreeRow>
          ))}
        </Tree>
      </Browser>

      <Canvas>
        <Part />
        <Properties>
          <DockHeader $h={24}>
            <DockTab $w={74}><span><J t="プロパティ" /></span><X size={13} color="#666" strokeWidth={2.4} /></DockTab>
            <HeaderPlus><Plus size={15} color="#666" strokeWidth={2.6} /></HeaderPlus>
            <DockTools />
          </DockHeader>
          <TitleRow>
            <TitleLink><J t="マイタ" /></TitleLink>
            <EyeFill />
          </TitleRow>
          <PresetRow>
            <PresetSelect><span><J t="プリセットなし" /></span><Caret $c="#aaa" /></PresetSelect>
            <PresetTools>
              <Plus size={14} color="#555" strokeWidth={2.8} />
              <GearFill />
            </PresetTools>
          </PresetRow>
          <SectionHead $mt={4}><SectionCaret />選択</SectionHead>
          <FieldRow $h={32}>
            <FieldLabel><J t="フレーム メンバ" /></FieldLabel>
            <GhostInput><CursorIcon /><BoxIcon /><span><J t="2 個のフレーム メンバ" /></span></GhostInput>
          </FieldRow>
          <SectionHead><SectionCaret />動作</SectionHead>
          <FieldRow $h={29}>
            <FieldLabel><J t="タイプ" /></FieldLabel>
            <ToggleGroup>
              <Toggle $on><TypeA /></Toggle>
              <Toggle><TypeB /></Toggle>
            </ToggleGroup>
            <RowCaret />
          </FieldRow>
          <FieldRow $h={28}>
            <FieldLabel><J t="オフセット方向" /></FieldLabel>
            <ToggleGroup>
              <Toggle><OffsetIcon v={1} /></Toggle>
              <Toggle><OffsetIcon v={2} /></Toggle>
              <Toggle $on><OffsetIcon v={3} /></Toggle>
            </ToggleGroup>
            <RowCaret />
          </FieldRow>
          <Diagram>
            <DiagramSvg width="267" height="126" viewBox="691 408 267 126">
              <path d="M768 444H896V508H816Z" fill="#a2bbdc" stroke="#6f9bd6" />
              <path d="M759 455 807 519V534H759Z" fill="#a2bbdc" stroke="#6f9bd6" />
              <path d="M783 440V534M756 476H806M809 476H818M820 476H866M872 476H880M882 476H901" stroke="#6f9bd6" fill="none" />
              <path d="M759 431 768 444M747 440 758 455" stroke="#1e9bd8" fill="none" />
              <path d="M783 423H778L764 436" stroke="#1e9bd8" fill="none" />
              <path d="M764 436 767 430 770 433Z M752 448 745 452 749 445Z" fill="#1e9bd8" stroke="#1e9bd8" />
            </DiagramSvg>
            <OffsetInput>
              <OffsetValue>0.000 mm</OffsetValue>
              <OffsetStep><StepArrow /></OffsetStep>
            </OffsetInput>
          </Diagram>
          <Footer>
            <PanelButton $primary>OK</PanelButton>
            <PanelButton><J t="キャンセル" /></PanelButton>
            <AddButton $w={25}>
              <Plus size={20} color="#20a050" strokeWidth={3.4} />
            </AddButton>
          </Footer>
        </Properties>
      </Canvas>
    </Main>

    <ArrowOverlay width="974" height="589" viewBox="0 0 974 589">
      <defs>
        <filter id="soft" x="-5%" y="-20%" width="110%" height="140%">
          <feGaussianBlur stdDeviation="1.500" />
        </filter>
      </defs>
      <path d="M115 527 677 243" stroke="#000" strokeOpacity=".4" strokeWidth="3.500" filter="url(#soft)" fill="none" />
      <path d="M114 524 675 241" stroke="#f24f52" strokeWidth="4" fill="none" />
      <path d="M683 236 670 237 677 247Z" fill="#f23f45" />
    </ArrowOverlay>
  </Page>
);

export default App;
